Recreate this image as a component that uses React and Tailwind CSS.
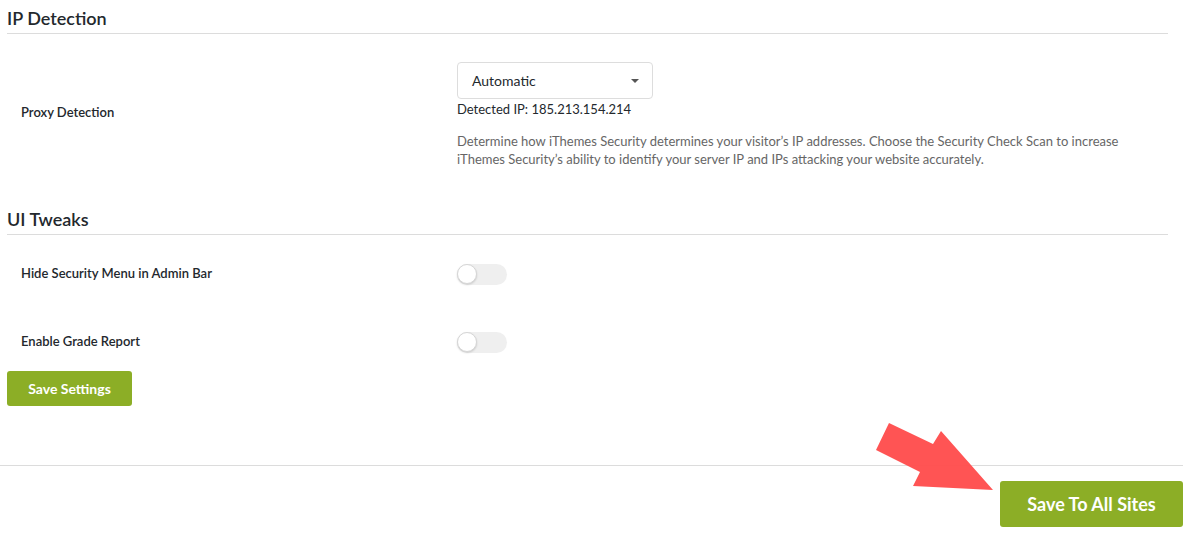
import React from 'react'

const font = { fontFamily: 'Lato, "Open Sans", sans-serif' }

function SectionTitle({ children, className = '' }) {
  return (
    <h2 className={`pt-[6px] pb-[3px] text-[18px] leading-[24px] font-semibold text-[#23282d] border-b border-[#dcdcdc] ${className}`}>
      {children}
    </h2>
  )
}

function Toggle() {
  return (
    <div className="relative w-[50px] h-[21px] rounded-full bg-[#efefef]">
      <span className="absolute left-0 top-[0.5px] w-[20px] h-[20px] rounded-full bg-white border border-[#d6d6d6] shadow-[0_1px_2px_rgba(0,0,0,0.15)]" />
    </div>
  )
}

function Row({ label, children, className = '', labelClass = '' }) {
  return (
    <div className={`flex items-center ${className}`}>
      <div className={`w-[450px] shrink-0 pl-[14px] text-[13px] font-semibold text-[#23282d] ${labelClass}`}>{label}</div>
      <div className="flex-1">{children}</div>
    </div>
  )
}

export default function App() {
  return (
    <div className="relative w-[1195px] h-[534px] bg-white overflow-hidden" style={font}>
      <div className="pl-[7px] pr-[27px]">
        <SectionTitle>IP Detection</SectionTitle>

        <Row label="Proxy Detection" className="pt-[28px]" labelClass="-mt-[4px]">
          <div className="w-[196px] h-[37px] border border-[#dddddd] rounded-[4px] flex items-center justify-between pl-[14px] pr-[13px] text-[14px] text-[#23282d]">
            <span>Automatic</span>
            <span className="w-0 h-0 border-l-[4px] border-r-[4px] border-t-[4px] border-l-transparent border-r-transparent border-t-[#555]" />
          </div>
          <p className="mt-[1px] text-[13px] leading-[18px] text-[#23282d]">Detected IP: 185.213.154.214</p>
          <p className="mt-[14px] text-[13px] leading-[18px] text-[#666666] max-w-[680px]">
            Determine how iThemes Security determines your visitor’s IP addresses. Choose the Security Check Scan to increase iThemes Security’s ability to identify your server IP and IPs attacking your website accurately.
          </p>
        </Row>

        <SectionTitle className="mt-[33px]">UI Tweaks</SectionTitle>

        <Row label="Hide Security Menu in Admin Bar" className="mt-[19px] h-[40px]">
          <Toggle />
        </Row>
        <Row label="Enable Grade Report" className="mt-[28px] h-[40px]">
          <Toggle />
        </Row>

        <button className="mt-[9px] w-[125px] h-[35px] rounded-[3px] bg-[#8cae26] text-white text-[14px] font-bold">
          Save Settings
        </button>
      </div>

      <div className="mt-[59px] mr-[12px] border-t border-[#dcdcdc] pt-[15px] flex justify-end">
        <button className="w-[183px] h-[46px] rounded-[3px] bg-[#8cae26] text-white text-[18px] font-bold">
          Save To All Sites
        </button>
      </div>

      {/* red pointer over the footer */}
      <svg className="absolute left-0 top-0 pointer-events-none" width="1195" height="534">
        <polygon
          points="889,423 933,444 941,431 993,490 913,486 920,472 876,450"
          fill="#ff4d4d"
          fillOpacity="0.96"
        />
      </svg>
    </div>
  )
}
